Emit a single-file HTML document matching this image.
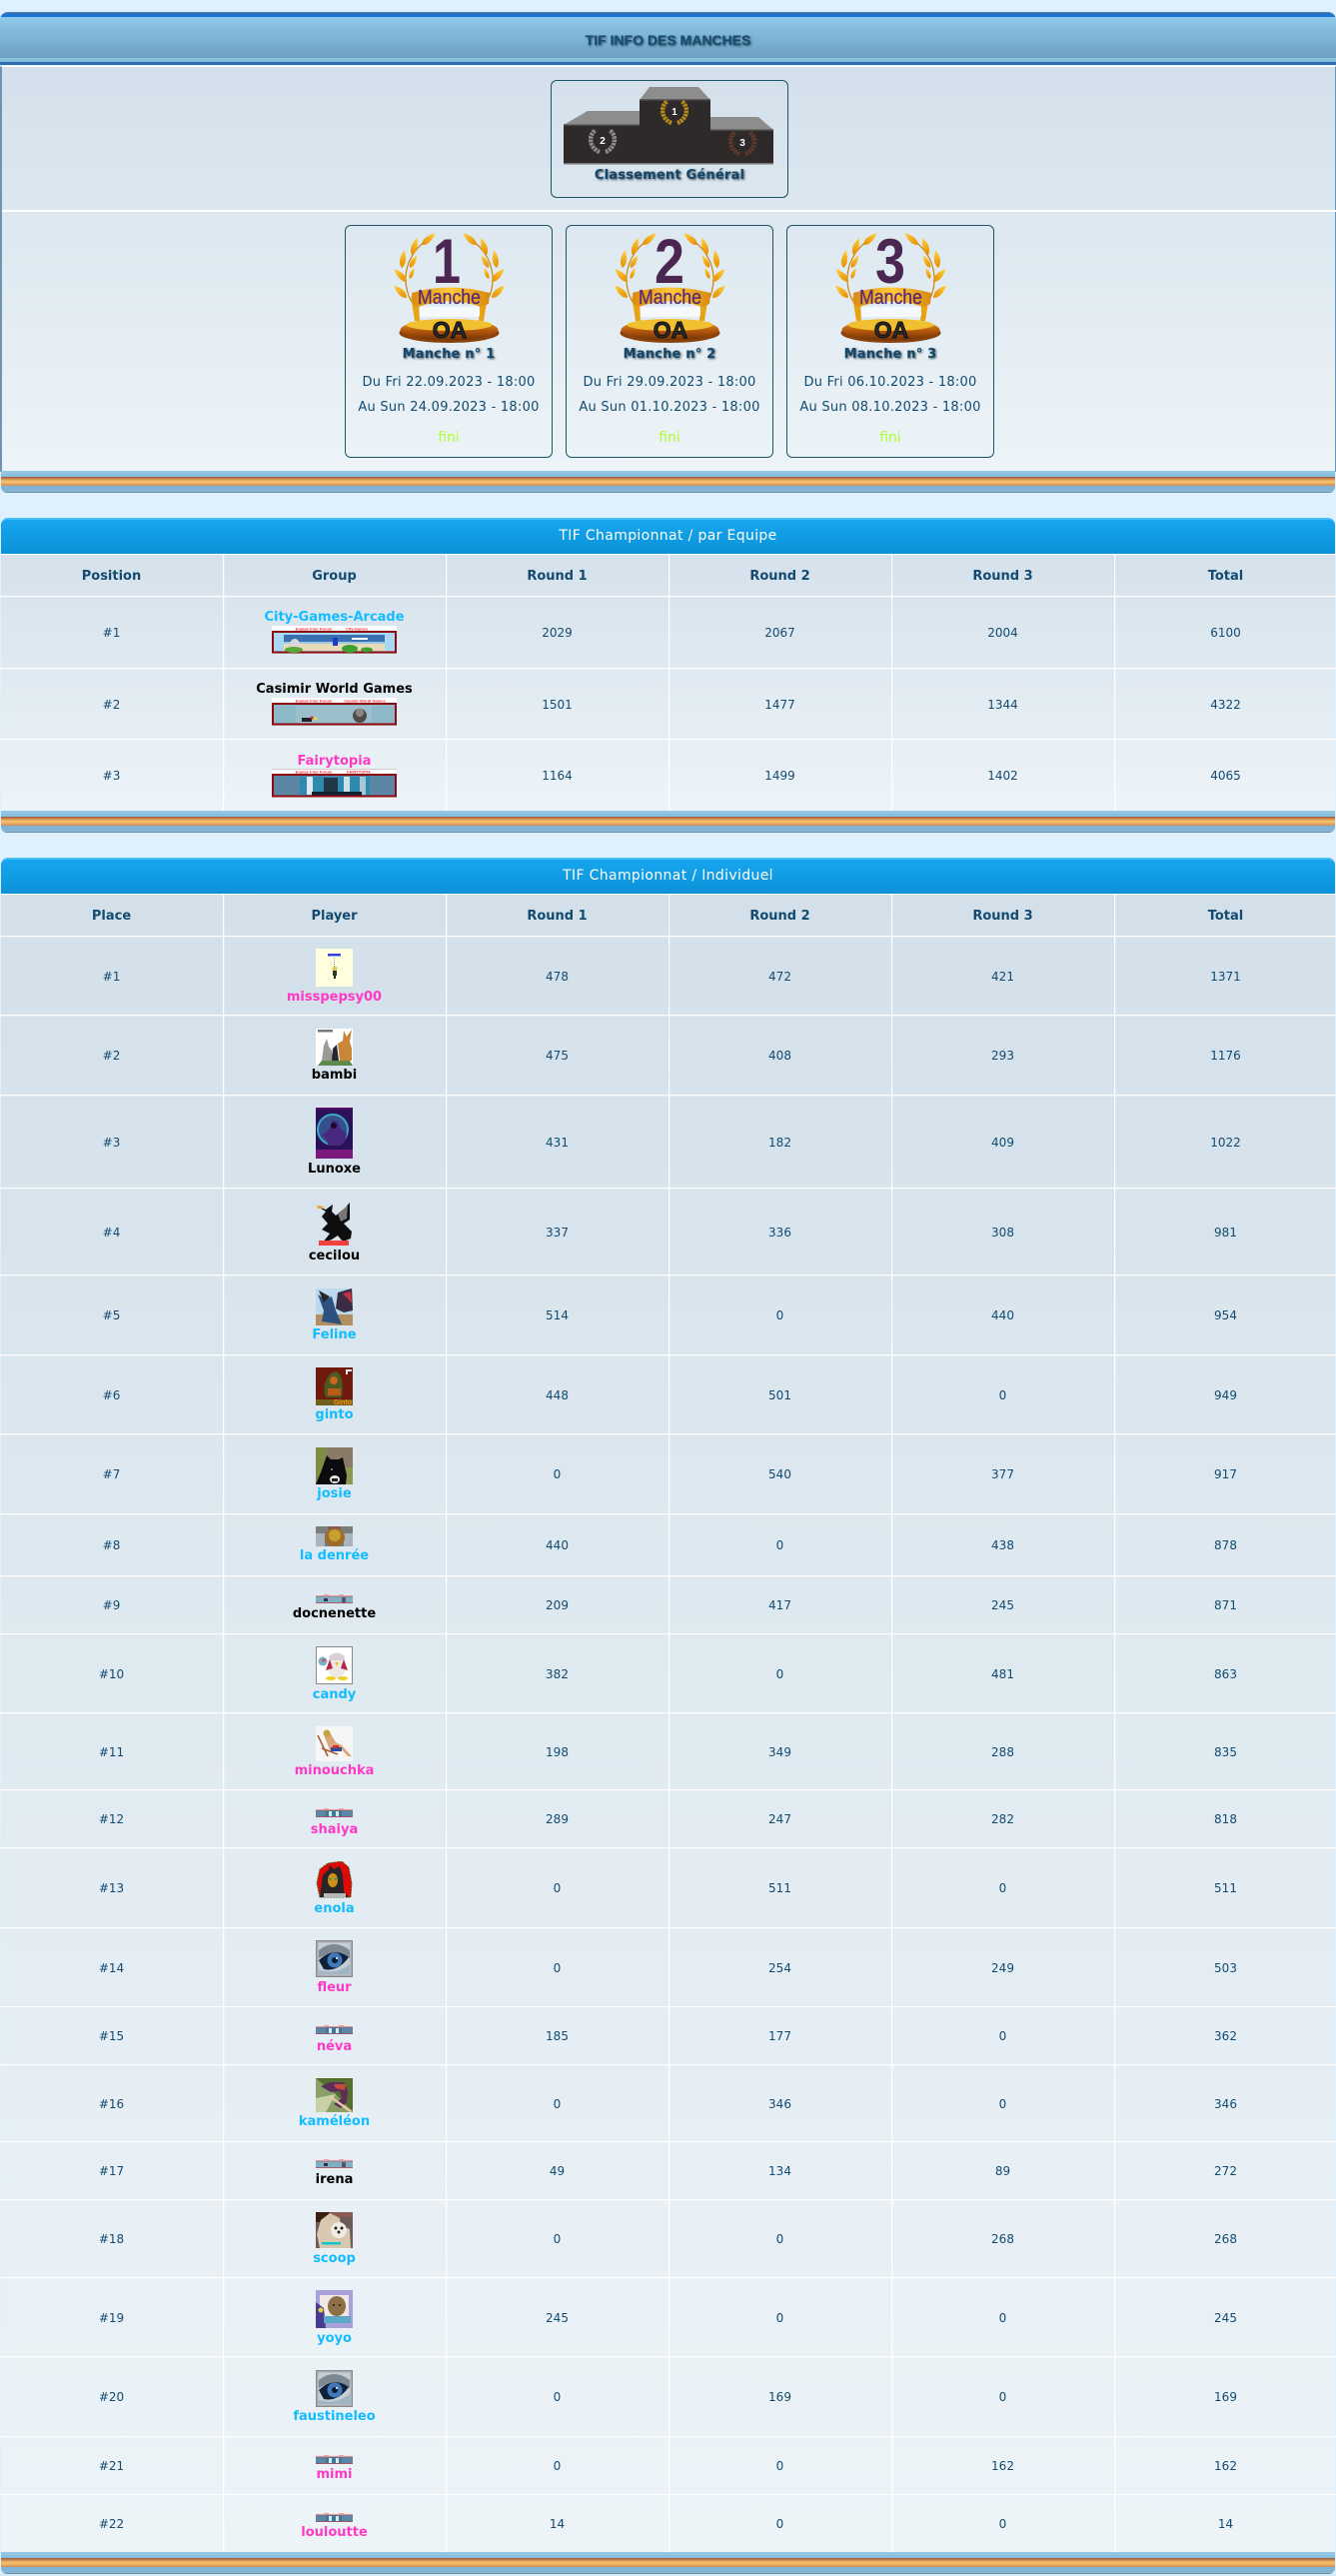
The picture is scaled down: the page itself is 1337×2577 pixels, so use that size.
<!DOCTYPE html>
<html><head><meta charset="utf-8"><title>TIF</title>
<style>
html,body{margin:0;padding:0}
body{position:relative;width:1337px;height:2577px;overflow:hidden;background:#dff0ff;font-family:"DejaVu Sans","Liberation Sans",sans-serif;font-size:12px;color:#124a70}
div{box-sizing:border-box}
.abs,.p,.foot,.bh,.r,.v,.n,.a,.c{position:absolute}
.foot{left:1px;width:1335px;height:22px;border-radius:0 0 6px 6px;background:linear-gradient(#97c9e6 0,#84bcdd 6px,#9b5f3c 6px,#b8764a 7.5px,#e2a25c 9px,#f8c570 11px,#e6a860 13px,#c98f58 15px,#7fb2d5 15px,#86b4d3 21px,#6b90ac 21px,#6b90ac 22px)}
.bh{left:1px;width:1335px;height:36px;border-radius:7px 7px 0 0;background:linear-gradient(#16a6ef,#0b92d8);border-top:2px solid #45bdf5;color:#fff;font-size:14px;letter-spacing:.35px;text-align:center;line-height:33px}
.r{left:0;width:1337px;display:grid;grid-template-columns:repeat(6,223px);border-bottom:1px solid #fff;box-shadow:0 1px 0 rgba(255,255,255,.25);text-align:center}
.r span{display:block;position:relative;top:1px}
.h{font-weight:bold;font-size:13px}
.v{width:1px;background:#fff;box-shadow:1px 0 0 rgba(255,255,255,.25)}
.n{left:223px;width:223px;height:20px;line-height:20px;margin-top:2px;text-align:center;font-weight:bold;font-size:13px}
.b{color:#12bcff}.k{color:#000}.m{color:#ff38c6}
.a{left:316px;width:37px}
svg{display:block;overflow:hidden}
.c{top:225px;width:208px;height:233px;border:1px solid #1f5468;border-radius:6px;text-align:center}
.ti{position:absolute;left:0;width:100%;font-weight:bold;font-size:13px;letter-spacing:.2px;color:#14466a;text-shadow:1px 1px 2px #3a4a55}
.d{position:absolute;left:0;width:100%;font-size:13px;letter-spacing:.25px;height:16px;line-height:16px;color:#124a70}
.f{position:absolute;left:0;width:100%;top:202px;font-size:14px;height:20px;line-height:20px;color:#adff2f}
</style></head>
<body>
<svg width="0" height="0" style="position:absolute">
<defs>
<linearGradient id="g1" x1="0" y1="0" x2="0" y2="1"><stop offset="0" stop-color="#ffd23e"/><stop offset="1" stop-color="#e48c00"/></linearGradient>
<linearGradient id="g2" x1="0" y1="0" x2="1" y2="0"><stop offset="0" stop-color="#d98a10"/><stop offset=".5" stop-color="#ffc83a"/><stop offset="1" stop-color="#d98a10"/></linearGradient>
<linearGradient id="g3" x1="0" y1="0" x2="0" y2="1"><stop offset="0" stop-color="#e8a820"/><stop offset=".55" stop-color="#b4560c"/><stop offset="1" stop-color="#6e3208"/></linearGradient>
<path id="lf" d="M0 0C-4-4-4-10 0-18C4-10 4-4 0 0Z" fill="url(#g1)"/>
<g id="side">
<path d="M24 78C8 58 10 26 38 8" fill="none" stroke="#c98410" stroke-width="1.200"/>
<use href="#lf" transform="translate(30 15) rotate(49)"/>
<use href="#lf" transform="translate(20 25) rotate(18)"/>
<use href="#lf" transform="translate(10 38) rotate(8)"/>
<use href="#lf" transform="translate(18 38) rotate(30) scale(.8)"/>
<use href="#lf" transform="translate(15 52) rotate(-44)"/>
<use href="#lf" transform="translate(18 49) rotate(22) scale(.65)"/>
<use href="#lf" transform="translate(15 68) rotate(-46)"/>
</g>
<g id="trophy">
<use href="#side"/>
<use href="#side" transform="matrix(-1 0 0 1 115 0)"/>
<path d="M19 66L23 91H28L27 74ZM96 66L92 91H87L88 74Z" fill="#e6a414"/>
<path d="M20 63Q57 52 98 63L97 74L90 77Q57 66 26 77L21 74Z" fill="url(#g2)"/>
<rect x="28" y="77" width="60" height="10" rx="2" fill="#f6f9fb"/>
<ellipse cx="57.500" cy="103" rx="50" ry="10" fill="#8a420c"/>
<ellipse cx="57.500" cy="100" rx="49" ry="10.500" fill="url(#g3)"/>
<ellipse cx="57.500" cy="95" rx="43" ry="6" fill="#f0c030"/>
<text x="57.500" y="74" text-anchor="middle" font-family="Liberation Sans,sans-serif" font-size="20" fill="#5c2a70" stroke="#5c2a70" stroke-width=".3" textLength="63" lengthAdjust="spacingAndGlyphs">Manche</text>
<text x="58" y="108" text-anchor="middle" font-family="Liberation Sans,sans-serif" font-weight="bold" font-size="23" fill="#2a2a2a" stroke="#0c0c0c" stroke-width=".9">OA</text>
</g>
<g id="wr" fill="none" stroke-width="4.400" stroke-dasharray="2.600 .8">
<path d="M-3 10C-13 6-15-6-7-12"/><path d="M3 10C13 6 15-6 7-12"/>
</g>
<g id="mb">
<rect width="37" height="9" fill="#5c86a6"/><rect width="37" height="1.500" fill="#f4e8ea"/><rect y="1.500" width="37" height=".8" fill="#b04a58"/><rect y="8.200" width="37" height=".8" fill="#b04a58"/><rect x="8" y="0" width="5" height="1" fill="#f4a0a8"/><rect x="23" y="0" width="5" height="1" fill="#f4a0a8"/>
<rect x="10" y="2.500" width="16" height="5.700" fill="#3a7a98"/><rect x="13" y="3" width="3" height="5" fill="#dfe8ee"/><rect x="20" y="3" width="3" height="5" fill="#dfe8ee"/>
</g>
<g id="mc">
<rect width="37" height="9" fill="#7fb0c4"/><rect width="37" height="1.500" fill="#f4e8ea"/><rect y="1.500" width="37" height=".8" fill="#b04a58"/><rect y="8.200" width="37" height=".8" fill="#b04a58"/><rect x="8" y="0" width="5" height="1" fill="#f4a0a8"/><rect x="23" y="0" width="5" height="1" fill="#f4a0a8"/>
<rect x="8" y="4" width="4" height="3" fill="#334"/><rect x="26" y="3" width="4" height="5" fill="#556"/>
</g>
<g id="eye">
<rect x=".5" y=".5" width="36" height="36" fill="#a8acb0" stroke="#8a8a8a"/>
<rect x="2.500" y="2.500" width="32" height="32" fill="#c5cdd5"/>
<path d="M3 10Q18-2 34 10L34 18Q20 8 3 18Z" fill="#7c8892"/>
<path d="M3 20Q18 6 33 17Q22 32 8 29Z" fill="#10223a"/>
<circle cx="19" cy="20" r="7.500" fill="#3f78bb"/><circle cx="19" cy="20" r="3" fill="#0b1a30"/><circle cx="21" cy="18" r="1" fill="#fff"/>
<path d="M3 30Q20 35 34 24V34H3Z" fill="#9fb4c4"/>
</g>
</defs>
</svg>

<!-- top panel -->
<div class="abs" style="left:0;top:12px;width:1337px;height:55px;border-radius:8px 8px 0 0;overflow:hidden;background:linear-gradient(#4d7fa8 0,#2c6fb8 2px,#1873dc 3px,#1a76d8 5px,#8fc9ea 5px,#6d9fc2 46px,#93c8e4 46px,#7fb5d6 50px,#2f6eb4 50px,#2f6eb4 53px,#dff0ff 53px,#dff0ff 55px)"></div>
<div class="abs" style="left:0;top:31px;width:1337px;height:18px;line-height:18px;text-align:center;font-family:'Liberation Sans',sans-serif;font-weight:bold;font-size:14px;color:#164c6e;text-shadow:1px 1px 2px #23425a">TIF INFO DES MANCHES</div>
<div class="p" style="left:0;top:66px;width:1337px;height:406px;border-left:2px solid #6d93b5;background:linear-gradient(#d3e0eb,#edf4f8);border-top:1px solid #fff;border-right:1px solid #6d93b5"></div>
<div class="abs" style="left:2px;top:210px;width:1335px;height:2px;background:#fff"></div>

<div class="abs" style="left:551px;top:80px;width:238px;height:118px;border:1px solid #1f5468;border-radius:6px"></div>
<svg class="abs" style="left:563px;top:87px" width="212" height="79" viewBox="563 87 212 79">
<polygon points="650,87 699,87 711,100 640,100" fill="#8d8d8d"/>
<polygon points="588,111 640,111 640,125 564,125" fill="#8d8d8d"/>
<polygon points="711,117 759,117 774,130 711,130" fill="#8d8d8d"/>
<rect x="640" y="100" width="71" height="64" fill="#2e2a29"/>
<rect x="564" y="125" width="76" height="39" fill="#2e2a29"/>
<rect x="711" y="130" width="63" height="34" fill="#2e2a29"/>
<rect x="640" y="99" width="71" height="1.500" fill="#5c5a58"/><rect x="564" y="124" width="76" height="1.500" fill="#6a6a68"/><rect x="711" y="129" width="63" height="1.500" fill="#6a6a68"/>
<rect x="564" y="163" width="210" height="1.500" fill="#77777a"/>
<use href="#wr" transform="translate(675 113)" stroke="#b88a18"/>
<use href="#wr" transform="translate(603 142)" stroke="#8c8c8c"/>
<use href="#wr" transform="translate(743 144)" stroke="#5e3a2c"/>
<g font-family="Liberation Sans,sans-serif" font-weight="bold" font-size="10" fill="#fff" text-anchor="middle"><text x="675" y="115">1</text><text x="603" y="144">2</text><text x="743" y="146">3</text></g>
</svg>
<div class="ti" style="left:551px;top:167px;width:238px;text-align:center;height:18px;line-height:18px">Classement Général</div>

<div class="c" style="left:345px">
<svg class="abs" style="left:46px;top:4px" width="115" height="115" viewBox="0 0 115 115"><use href="#trophy"/><text x="55" y="53" text-anchor="middle" font-family="Liberation Sans,sans-serif" font-weight="bold" font-size="63" fill="#4b2650" textLength="28" lengthAdjust="spacingAndGlyphs">1</text></svg>
<div class="ti" style="top:120px;height:18px;line-height:18px">Manche n° 1</div>
<div class="d" style="top:149px">Du Fri 22.09.2023 - 18:00</div>
<div class="d" style="top:174px">Au Sun 24.09.2023 - 18:00</div>
<div class="f">fini</div>
</div>
<div class="c" style="left:566px">
<svg class="abs" style="left:46px;top:4px" width="115" height="115" viewBox="0 0 115 115"><use href="#trophy"/><text x="57" y="53" text-anchor="middle" font-family="Liberation Sans,sans-serif" font-weight="bold" font-size="63" fill="#4b2650" textLength="30" lengthAdjust="spacingAndGlyphs">2</text></svg>
<div class="ti" style="top:120px;height:18px;line-height:18px">Manche n° 2</div>
<div class="d" style="top:149px">Du Fri 29.09.2023 - 18:00</div>
<div class="d" style="top:174px">Au Sun 01.10.2023 - 18:00</div>
<div class="f">fini</div>
</div>
<div class="c" style="left:787px">
<svg class="abs" style="left:46px;top:4px" width="115" height="115" viewBox="0 0 115 115"><use href="#trophy"/><text x="57" y="53" text-anchor="middle" font-family="Liberation Sans,sans-serif" font-weight="bold" font-size="63" fill="#4b2650" textLength="30" lengthAdjust="spacingAndGlyphs">3</text></svg>
<div class="ti" style="top:120px;height:18px;line-height:18px">Manche n° 3</div>
<div class="d" style="top:149px">Du Fri 06.10.2023 - 18:00</div>
<div class="d" style="top:174px">Au Sun 08.10.2023 - 18:00</div>
<div class="f">fini</div>
</div>
<div class="foot" style="top:471px"></div>

<!-- table 1 -->
<div class="bh" style="top:518px">TIF Championnat / par Equipe</div>
<div class="p" style="left:1px;top:555px;width:1335px;height:256px;background:linear-gradient(#d5e1eb,#edf4f9)"></div>
<div class="abs" style="left:0;top:554px;width:1337px;height:1px;background:#fff"></div>
<div class="r h" style="top:555px;height:42px;line-height:41px"><span>Position</span><span>Group</span><span>Round 1</span><span>Round 2</span><span>Round 3</span><span>Total</span></div>
<div class="r" style="top:597px;height:72px;line-height:71px"><span>#1</span><span></span><span>2029</span><span>2067</span><span>2004</span><span>6100</span></div>
<div class="r" style="top:669px;height:71px;line-height:70px"><span>#2</span><span></span><span>1501</span><span>1477</span><span>1344</span><span>4322</span></div>
<div class="r" style="top:740px;height:71px;line-height:71px;border-bottom:0;box-shadow:none"><span>#3</span><span></span><span>1164</span><span>1499</span><span>1402</span><span>4065</span></div>
<div class="v" style="left:223px;top:555px;height:256px"></div><div class="v" style="left:446px;top:555px;height:256px"></div><div class="v" style="left:669px;top:555px;height:256px"></div><div class="v" style="left:892px;top:555px;height:256px"></div><div class="v" style="left:1115px;top:555px;height:256px"></div>
<div class="n b" style="top:606px">City-Games-Arcade</div>
<div class="n k" style="top:678px">Casimir World Games</div>
<div class="n m" style="top:750px">Fairytopia</div>

<svg class="abs" style="left:272px;top:626px" width="125" height="28" viewBox="0 0 125 28"><rect width="125" height="28" fill="#fff"/><rect y="27" width="125" height="1" fill="#ccc"/><text x="42" y="4.500" font-family="Liberation Sans,sans-serif" font-size="4" fill="#f03040" text-anchor="middle" font-weight="bold">Equipe Inter Forum</text><text x="85" y="4.500" font-family="Liberation Sans,sans-serif" font-size="4" fill="#f03040" text-anchor="middle" font-weight="bold">City-Games</text>
<rect x="1" y="6" width="123" height="20.500" fill="#a8d8f4" stroke="#8e0a10" stroke-width="2"/><rect x="12" y="9" width="101" height="16" fill="#e8dcb8"/><rect x="12" y="9" width="101" height="7" fill="#3a70b0"/><rect x="12" y="16" width="101" height="2" fill="#9cc8e8"/><ellipse cx="23" cy="19" rx="5" ry="6" fill="#d8d8d8"/><ellipse cx="22" cy="24" rx="9" ry="3" fill="#5aa83a"/><ellipse cx="78" cy="23" rx="8" ry="4" fill="#3ea030"/><ellipse cx="95" cy="24" rx="6" ry="2.500" fill="#3ea030"/><rect x="61" y="12" width="5" height="8" fill="#1a3cc0"/><rect x="80" y="12" width="16" height="2" fill="#fff"/></svg>
<svg class="abs" style="left:272px;top:698px" width="125" height="28" viewBox="0 0 125 28"><rect width="125" height="28" fill="#fff"/><rect y="27" width="125" height="1" fill="#ccc"/><text x="42" y="4.500" font-family="Liberation Sans,sans-serif" font-size="4" fill="#f03040" text-anchor="middle" font-weight="bold">Equipe Inter Forum</text><text x="93" y="4.500" font-family="Liberation Sans,sans-serif" font-size="4" fill="#f03040" text-anchor="middle" font-weight="bold">Casimir World Games</text>
<rect x="1" y="6" width="123" height="20.500" fill="#8cb8c8" stroke="#8e0a10" stroke-width="2"/><rect x="24" y="8" width="76" height="17" fill="#9cbfce"/><ellipse cx="88" cy="18" rx="7" ry="7" fill="#4c4c48"/><circle cx="88" cy="15" r="4" fill="#8a8680"/><rect x="30" y="20" width="10" height="4" fill="#222"/><circle cx="40" cy="20" r="1.500" fill="#e02020"/><circle cx="44" cy="21" r="1.500" fill="#f0e020"/></svg>
<svg class="abs" style="left:272px;top:769px" width="125" height="29" viewBox="0 0 125 29"><rect width="125" height="29" fill="#fff"/><rect y="0" width="125" height="1" fill="#ccc"/><text x="42" y="4.500" font-family="Liberation Sans,sans-serif" font-size="4" fill="#f03040" text-anchor="middle" font-weight="bold">Equipe Inter Forum</text><text x="87" y="4.500" font-family="Liberation Sans,sans-serif" font-size="4" fill="#f03040" text-anchor="middle" font-weight="bold">FAIRYTOPIA</text>
<rect x="1" y="6" width="123" height="21.500" fill="#5c86a6" stroke="#8e0a10" stroke-width="2"/><rect x="28" y="8" width="70" height="18" fill="#2f8ab0"/><rect x="35" y="8" width="6" height="18" fill="#dfeaf0"/><rect x="52" y="9" width="14" height="14" fill="#203848"/><rect x="72" y="8" width="6" height="18" fill="#cfe0ea"/><rect x="88" y="8" width="6" height="18" fill="#a8c8d8"/><rect x="40" y="23" width="50" height="3.500" fill="#123"/></svg>
<div class="foot" style="top:811px"></div>

<!-- table 2 -->
<div class="bh" style="top:858px">TIF Championnat / Individuel</div>
<div class="p" style="left:1px;top:895px;width:1335px;height:1658px;background:linear-gradient(#d3e0ea,#edf4f8)"></div>
<div class="abs" style="left:0;top:894px;width:1337px;height:1px;background:#fff"></div>
<div class="r h" style="top:895px;height:42px;line-height:41px"><span>Place</span><span>Player</span><span>Round 1</span><span>Round 2</span><span>Round 3</span><span>Total</span></div>
<div class="r" style="top:937px;height:79px;line-height:78px"><span>#1</span><span></span><span>478</span><span>472</span><span>421</span><span>1371</span></div>
<div class="r" style="top:1016px;height:80px;line-height:79px"><span>#2</span><span></span><span>475</span><span>408</span><span>293</span><span>1176</span></div>
<div class="r" style="top:1096px;height:93px;line-height:92px"><span>#3</span><span></span><span>431</span><span>182</span><span>409</span><span>1022</span></div>
<div class="r" style="top:1189px;height:87px;line-height:86px"><span>#4</span><span></span><span>337</span><span>336</span><span>308</span><span>981</span></div>
<div class="r" style="top:1276px;height:80px;line-height:79px"><span>#5</span><span></span><span>514</span><span>0</span><span>440</span><span>954</span></div>
<div class="r" style="top:1356px;height:79px;line-height:78px"><span>#6</span><span></span><span>448</span><span>501</span><span>0</span><span>949</span></div>
<div class="r" style="top:1435px;height:80px;line-height:79px"><span>#7</span><span></span><span>0</span><span>540</span><span>377</span><span>917</span></div>
<div class="r" style="top:1515px;height:62px;line-height:61px"><span>#8</span><span></span><span>440</span><span>0</span><span>438</span><span>878</span></div>
<div class="r" style="top:1577px;height:58px;line-height:57px"><span>#9</span><span></span><span>209</span><span>417</span><span>245</span><span>871</span></div>
<div class="r" style="top:1635px;height:79px;line-height:78px"><span>#10</span><span></span><span>382</span><span>0</span><span>481</span><span>863</span></div>
<div class="r" style="top:1714px;height:77px;line-height:76px"><span>#11</span><span></span><span>198</span><span>349</span><span>288</span><span>835</span></div>
<div class="r" style="top:1791px;height:58px;line-height:57px"><span>#12</span><span></span><span>289</span><span>247</span><span>282</span><span>818</span></div>
<div class="r" style="top:1849px;height:80px;line-height:79px"><span>#13</span><span></span><span>0</span><span>511</span><span>0</span><span>511</span></div>
<div class="r" style="top:1929px;height:79px;line-height:78px"><span>#14</span><span></span><span>0</span><span>254</span><span>249</span><span>503</span></div>
<div class="r" style="top:2008px;height:58px;line-height:57px"><span>#15</span><span></span><span>185</span><span>177</span><span>0</span><span>362</span></div>
<div class="r" style="top:2066px;height:77px;line-height:76px"><span>#16</span><span></span><span>0</span><span>346</span><span>0</span><span>346</span></div>
<div class="r" style="top:2143px;height:58px;line-height:57px"><span>#17</span><span></span><span>49</span><span>134</span><span>89</span><span>272</span></div>
<div class="r" style="top:2201px;height:78px;line-height:77px"><span>#18</span><span></span><span>0</span><span>0</span><span>268</span><span>268</span></div>
<div class="r" style="top:2279px;height:79px;line-height:78px"><span>#19</span><span></span><span>245</span><span>0</span><span>0</span><span>245</span></div>
<div class="r" style="top:2358px;height:80px;line-height:79px"><span>#20</span><span></span><span>0</span><span>169</span><span>0</span><span>169</span></div>
<div class="r" style="top:2438px;height:58px;line-height:57px"><span>#21</span><span></span><span>0</span><span>0</span><span>162</span><span>162</span></div>
<div class="r" style="top:2496px;height:57px;line-height:57px;border-bottom:0;box-shadow:none"><span>#22</span><span></span><span>14</span><span>0</span><span>0</span><span>14</span></div>
<div class="v" style="left:223px;top:895px;height:1658px"></div><div class="v" style="left:446px;top:895px;height:1658px"></div><div class="v" style="left:669px;top:895px;height:1658px"></div><div class="v" style="left:892px;top:895px;height:1658px"></div><div class="v" style="left:1115px;top:895px;height:1658px"></div>

<!-- avatars -->
<svg class="a" style="top:949px" width="37" height="38" viewBox="0 0 37 38"><rect width="37" height="38" fill="#ffffe0"/><rect x="12" y="5" width="13" height="2.500" fill="#3040e8"/><path d="M18.500 9V18" stroke="#999" stroke-dasharray="1 1"/><circle cx="19" cy="20" r="2.500" fill="#e0c860"/><rect x="17" y="22" width="4" height="5" fill="#2c3a20"/><rect x="18" y="27" width="2" height="3" fill="#222"/></svg>
<svg class="a" style="top:1029px" width="37" height="37" viewBox="0 0 37 37"><rect width="37" height="37" fill="#fff"/><rect x="2" y="1" width="15" height="2.500" fill="#777"/><path d="M24 32L22 15L27 12L28 2L31 8L36 1L34 13L36 20L36 32Z" fill="#c88638"/><path d="M6 32L8 17L11 10L13 18L16 22L17 32Z" fill="#9b9a94"/><path d="M16 32L17 20L21 16L23 32Z" fill="#26262e"/><path d="M2 37L6 32H34L37 37Z" fill="#5f8a4c"/></svg>
<svg class="a" style="top:1108px" width="37" height="51" viewBox="0 0 37 51"><rect width="37" height="51" fill="#2b1158"/><circle cx="17" cy="22" r="15" fill="#35508a" stroke="#3ea6c4" stroke-width="2"/><path d="M13 38L9 30L6 28L13 22L17 12L22 14L25 22L31 26L29 34L24 38Z" fill="#4a2880"/><circle cx="18" cy="18" r="3" fill="#180828"/><rect y="42" width="37" height="9" fill="#7a1a7e"/><rect y="0" width="37" height="2" fill="#580c6a"/></svg>
<svg class="a" style="top:1202px" width="37" height="44" viewBox="0 0 37 44"><path d="M2 5L10 8L17 3L16 10L20 14L28 8L34 1L34 18L28 22L36 30L35 37L27 40L22 34L16 38L7 41L14 32L6 28L12 22L6 15L10 10Z" fill="#0e0e0e"/><path d="M22 12L32 4L31 17L25 20Z" fill="#777"/><path d="M1 4L8 5L7 7L2 7Z" fill="#e8a030"/><rect x="3" y="39" width="30" height="5" fill="#f04040"/></svg>
<svg class="a" style="top:1289px" width="37" height="37" viewBox="0 0 37 37"><rect width="37" height="37" fill="#bcd8ec"/><rect y="26" width="37" height="11" fill="#b09060"/><path d="M6 33L8 22L2 6L9 11L16 8L20 22L26 36Z" fill="#2e5080"/><path d="M3 2L14 8L8 14Z" fill="#26262e"/><path d="M20 20L22 4L36 0L37 22L28 24Z" fill="#3a2c44"/><path d="M27 5L35 3L36 15L32 10Z" fill="#c83040"/></svg>
<svg class="a" style="top:1368px" width="37" height="38" viewBox="0 0 37 38"><rect width="37" height="38" fill="#701a0e"/><path d="M10 30C6 20 10 6 20 4C27 6 28 20 26 30Z" fill="#4a5a20"/><circle cx="18" cy="13" r="4" fill="#c86820"/><path d="M12 21H25V28H12Z" fill="#b85a18"/><path d="M30 2H36V4H32V7H30Z" fill="#eee"/><rect y="32" width="37" height="6" fill="#70601c"/><text x="36" y="37" text-anchor="end" font-family="Liberation Sans,sans-serif" font-weight="bold" font-size="7" fill="#ff8c10">Ginto</text></svg>
<svg class="a" style="top:1448px" width="37" height="37" viewBox="0 0 37 37"><rect width="37" height="37" fill="#887c68"/><path d="M0 0H12L6 24L0 37Z" fill="#7f8c44"/><rect x="28" y="20" width="9" height="17" fill="#8c9850"/><path d="M0 37L5 25L11 8L15 12H23L27 10L31 28L30 37Z" fill="#0c0c0e"/><ellipse cx="19" cy="32" rx="5" ry="4" fill="#e8e4dc"/><rect x="16" y="31" width="6" height="3" fill="#222"/><circle cx="16" cy="22" r="1" fill="#999"/></svg>
<svg class="a" style="top:1527px" width="37" height="20" viewBox="0 0 37 20"><rect width="37" height="20" fill="#7c7c78"/><rect x="0" y="7" width="9" height="13" fill="#a8b4be"/><rect x="28" y="7" width="9" height="13" fill="#a8b4be"/><ellipse cx="19" cy="11" rx="10" ry="9" fill="#a06a28"/><ellipse cx="19" cy="9" rx="6" ry="6" fill="#c8a030"/><rect x="12" y="0" width="13" height="3" fill="#8c5c48"/></svg>
<svg class="a" style="top:1595px" width="37" height="9" viewBox="0 0 37 9"><use href="#mc"/></svg>
<svg class="a" style="top:1647px" width="37" height="38" viewBox="0 0 37 38"><rect x=".5" y=".5" width="36" height="37" fill="#fff" stroke="#8a8a8a"/><ellipse cx="21" cy="20" rx="9" ry="12" fill="#efe6e6"/><path d="M13 10Q21 3 29 10L28 14H14Z" fill="#d8d0d4"/><path d="M10 24L14 13L17 22ZM32 24L28 13L25 22Z" fill="#b02a48"/><path d="M19 16H23L21 20Z" fill="#f0c020"/><ellipse cx="15" cy="32" rx="5" ry="2" fill="#f0d020"/><ellipse cx="27" cy="32" rx="5" ry="2" fill="#f0d020"/><circle cx="7" cy="15" r="4.500" fill="#7cb0c8"/><circle cx="8" cy="14" r="1.500" fill="#e84040"/></svg>
<svg class="a" style="top:1727px" width="37" height="35" viewBox="0 0 37 35"><rect width="37" height="35" fill="#f6f6f6"/><path d="M2 9L12 30M6 22L22 28" stroke="#a85a30" stroke-width="1.500" fill="none"/><path d="M8 8L14 24L25 22L32 30L36 30L26 19L20 16L14 6Z" fill="#d8a878"/><circle cx="11" cy="7" r="3.500" fill="#c8a040"/><rect x="15" y="21" width="11" height="4" fill="#2c4ea0"/><rect x="17" y="19" width="6" height="3" fill="#c83030"/></svg>
<svg class="a" style="top:1809px" width="37" height="9" viewBox="0 0 37 9"><use href="#mb"/></svg>
<svg class="a" style="top:1862px" width="37" height="37" viewBox="0 0 37 37"><path d="M4 36L1 22L4 8L12 2L26 0L33 6L36 22L35 36Z" fill="#e00808" stroke="#4a6a1c" stroke-width="1" stroke-dasharray="2 1"/><path d="M4 36L7 14L13 8L14 4L18 8L24 5L27 14L28 30L33 36Z" fill="#262628"/><ellipse cx="17" cy="19" rx="5" ry="7" fill="#d09018"/><path d="M12 17L16 17L15 19ZM18 17L23 17L20 19Z" fill="#10a060"/><rect x="8" y="32" width="22" height="4" fill="#b8b8b8"/></svg>
<svg class="a" style="top:1941px" width="37" height="37" viewBox="0 0 37 37"><use href="#eye"/></svg>
<svg class="a" style="top:2026px" width="37" height="9" viewBox="0 0 37 9"><use href="#mb"/></svg>
<svg class="a" style="top:2079px" width="37" height="34" viewBox="0 0 37 34"><rect width="37" height="34" fill="#89a066"/><path d="M0 0H37V34L20 16Z" fill="#55702e"/><path d="M0 20L20 16L10 34H0Z" fill="#c8d0a8"/><path d="M5 8L14 4L28 4L32 12L31 24L25 30L18 26L26 20L24 13L15 14Z" fill="#5a2e58"/><path d="M18 6L30 6L29 12L20 10Z" fill="#c84a3a"/><path d="M14 17L37 33L34 34L13 19Z" fill="#e8c8a8"/></svg>
<svg class="a" style="top:2160px" width="37" height="9" viewBox="0 0 37 9"><use href="#mc"/></svg>
<svg class="a" style="top:2213px" width="37" height="36" viewBox="0 0 37 36"><rect width="37" height="36" fill="#6e5a58"/><rect width="14" height="10" fill="#3a1e14"/><rect x="14" width="23" height="5" fill="#8c5a50"/><path d="M1 22L5 8L14 1L24 6L25 14L34 17L35 36H4Z" fill="#d8c8b0"/><circle cx="23" cy="18" r="8" fill="#f0ece4"/><circle cx="20" cy="16" r="1.500" fill="#222"/><circle cx="26" cy="16" r="1.500" fill="#222"/><circle cx="23" cy="20" r="1.500" fill="#222"/><rect x="6" y="30" width="19" height="2.500" fill="#10c8c8"/></svg>
<svg class="a" style="top:2291px" width="37" height="38" viewBox="0 0 37 38"><rect width="37" height="38" fill="#a8a0d8"/><rect x="4" y="5" width="29" height="26" fill="#f0e8e4"/><ellipse cx="21" cy="16" rx="9" ry="10" fill="#8c7048"/><circle cx="18" cy="15" r="1" fill="#222"/><circle cx="24" cy="15" r="1" fill="#222"/><path d="M0 38V12L8 18L10 38Z" fill="#483c90"/><circle cx="5" cy="20" r="2.500" fill="#e8d040"/><rect x="8" y="26" width="27" height="7" fill="#5ca8c8"/></svg>
<svg class="a" style="top:2371px" width="37" height="37" viewBox="0 0 37 37"><use href="#eye"/></svg>
<svg class="a" style="top:2456px" width="37" height="9" viewBox="0 0 37 9"><use href="#mb"/></svg>
<svg class="a" style="top:2514px" width="37" height="9" viewBox="0 0 37 9"><use href="#mb"/></svg>

<div class="n m" style="top:986px">misspepsy00</div>
<div class="n k" style="top:1064px">bambi</div>
<div class="n k" style="top:1158px">Lunoxe</div>
<div class="n k" style="top:1245px">cecilou</div>
<div class="n b" style="top:1324px">Feline</div>
<div class="n b" style="top:1404px">ginto</div>
<div class="n b" style="top:1483px">josie</div>
<div class="n b" style="top:1545px">la denrée</div>
<div class="n k" style="top:1603px">docnenette</div>
<div class="n b" style="top:1684px">candy</div>
<div class="n m" style="top:1760px">minouchka</div>
<div class="n m" style="top:1819px">shaiya</div>
<div class="n b" style="top:1898px">enola</div>
<div class="n m" style="top:1977px">fleur</div>
<div class="n m" style="top:2036px">néva</div>
<div class="n b" style="top:2111px">kaméléon</div>
<div class="n k" style="top:2169px">irena</div>
<div class="n b" style="top:2248px">scoop</div>
<div class="n b" style="top:2328px">yoyo</div>
<div class="n b" style="top:2406px">faustineleo</div>
<div class="n m" style="top:2464px">mimi</div>
<div class="n m" style="top:2522px">louloutte</div>

<div class="foot" style="top:2553px"></div>
<div class="abs" style="left:0;top:2575px;width:1337px;height:2px;background:#d4ecf8"></div>
</body></html>
